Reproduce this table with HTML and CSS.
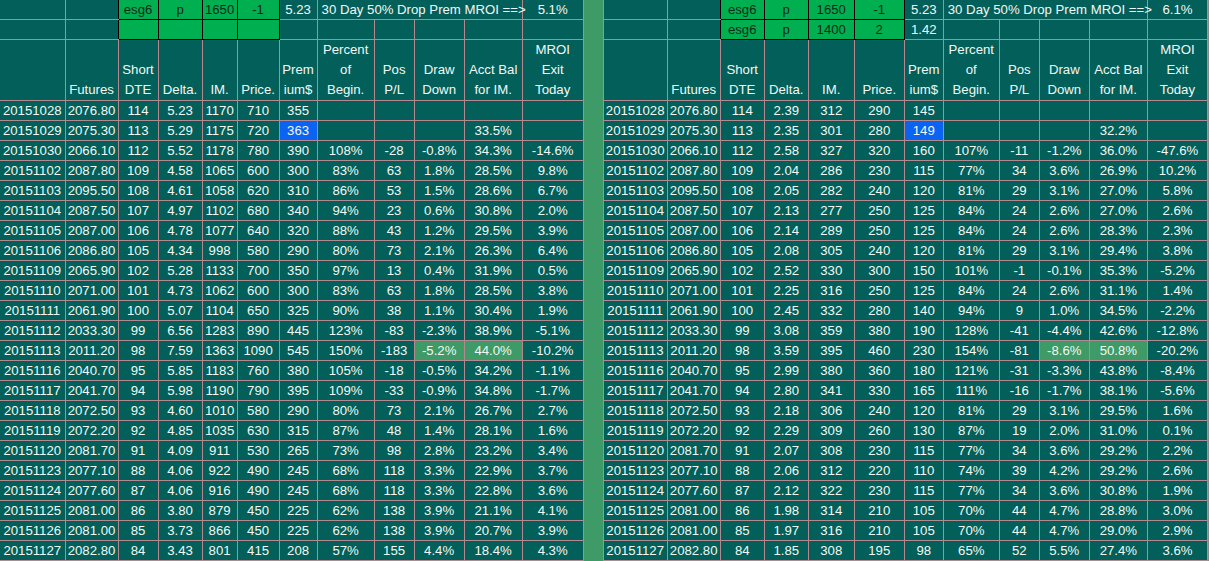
FILE: index.html
```html
<!DOCTYPE html>
<html>
<head>
<meta charset="utf-8">
<link rel="stylesheet" href="styles.css">
</head>
<body>
<table class="sheet">
<colgroup>
<col style="width:65px"><col style="width:53px"><col style="width:40px"><col style="width:44px"><col style="width:35px"><col style="width:42px"><col style="width:38px"><col style="width:57px"><col style="width:40px"><col style="width:50px"><col style="width:58px"><col style="width:61px">
<col style="width:20px">
<col style="width:64px"><col style="width:53px"><col style="width:44px"><col style="width:44px"><col style="width:46px"><col style="width:50px"><col style="width:39px"><col style="width:56px"><col style="width:40px"><col style="width:50px"><col style="width:58px"><col style="width:60px">
</colgroup>
<tbody>
<tr>
<td></td><td class="gl"></td><td class="gc">esg6</td><td class="gc">p</td><td class="gc">1650</td><td class="gc">-1</td><td>5.23</td><td colspan="4" class="lt">30 Day 50% Drop Prem MROI ==&gt;</td><td>5.1%</td>
<td rowspan="26" class="sep"></td>
<td></td><td class="gl"></td><td class="gc">esg6</td><td class="gc">p</td><td class="gc">1650</td><td class="gc">-1</td><td>5.23</td><td colspan="4" class="lt">30 Day 50% Drop Prem MROI ==&gt;</td><td>6.1%</td>
</tr>
<tr>
<td></td><td class="gl"></td><td class="gc"></td><td class="gc"></td><td class="gc"></td><td class="gc"></td><td></td><td></td><td></td><td></td><td></td><td></td>
<td></td><td class="gl"></td><td class="gc">esg6</td><td class="gc">p</td><td class="gc">1400</td><td class="gc">2</td><td>1.42</td><td></td><td></td><td></td><td></td><td></td>
</tr>
<tr class="hd">
<td></td><td>Futures</td><td>Short<br>DTE</td><td>Delta.</td><td>IM.</td><td>Price.</td><td>Prem<br>ium$</td><td>Percent<br>of<br>Begin.</td><td>Pos<br>P/L</td><td>Draw<br>Down</td><td>Acct Bal<br>for IM.</td><td>MROI<br>Exit<br>Today</td>
<td></td><td>Futures</td><td>Short<br>DTE</td><td>Delta.</td><td>IM.</td><td>Price.</td><td>Prem<br>ium$</td><td>Percent<br>of<br>Begin.</td><td>Pos<br>P/L</td><td>Draw<br>Down</td><td>Acct Bal<br>for IM.</td><td>MROI<br>Exit<br>Today</td>
</tr>
<tr><td>20151028</td><td>2076.80</td><td>114</td><td>5.23</td><td>1170</td><td>710</td><td>355</td><td></td><td></td><td></td><td></td><td></td>
<td>20151028</td><td>2076.80</td><td>114</td><td>2.39</td><td>312</td><td>290</td><td>145</td><td></td><td></td><td></td><td></td><td></td></tr>
<tr><td>20151029</td><td>2075.30</td><td>113</td><td>5.29</td><td>1175</td><td>720</td><td class="bl">363</td><td></td><td></td><td></td><td>33.5%</td><td></td>
<td>20151029</td><td>2075.30</td><td>113</td><td>2.35</td><td>301</td><td>280</td><td class="bl">149</td><td></td><td></td><td></td><td>32.2%</td><td></td></tr>
<tr><td>20151030</td><td>2066.10</td><td>112</td><td>5.52</td><td>1178</td><td>780</td><td>390</td><td>108%</td><td>-28</td><td>-0.8%</td><td>34.3%</td><td>-14.6%</td>
<td>20151030</td><td>2066.10</td><td>112</td><td>2.58</td><td>327</td><td>320</td><td>160</td><td>107%</td><td>-11</td><td>-1.2%</td><td>36.0%</td><td>-47.6%</td></tr>
<tr><td>20151102</td><td>2087.80</td><td>109</td><td>4.58</td><td>1065</td><td>600</td><td>300</td><td>83%</td><td>63</td><td>1.8%</td><td>28.5%</td><td>9.8%</td>
<td>20151102</td><td>2087.80</td><td>109</td><td>2.04</td><td>286</td><td>230</td><td>115</td><td>77%</td><td>34</td><td>3.6%</td><td>26.9%</td><td>10.2%</td></tr>
<tr><td>20151103</td><td>2095.50</td><td>108</td><td>4.61</td><td>1058</td><td>620</td><td>310</td><td>86%</td><td>53</td><td>1.5%</td><td>28.6%</td><td>6.7%</td>
<td>20151103</td><td>2095.50</td><td>108</td><td>2.05</td><td>282</td><td>240</td><td>120</td><td>81%</td><td>29</td><td>3.1%</td><td>27.0%</td><td>5.8%</td></tr>
<tr><td>20151104</td><td>2087.50</td><td>107</td><td>4.97</td><td>1102</td><td>680</td><td>340</td><td>94%</td><td>23</td><td>0.6%</td><td>30.8%</td><td>2.0%</td>
<td>20151104</td><td>2087.50</td><td>107</td><td>2.13</td><td>277</td><td>250</td><td>125</td><td>84%</td><td>24</td><td>2.6%</td><td>27.0%</td><td>2.6%</td></tr>
<tr><td>20151105</td><td>2087.00</td><td>106</td><td>4.78</td><td>1077</td><td>640</td><td>320</td><td>88%</td><td>43</td><td>1.2%</td><td>29.5%</td><td>3.9%</td>
<td>20151105</td><td>2087.00</td><td>106</td><td>2.14</td><td>289</td><td>250</td><td>125</td><td>84%</td><td>24</td><td>2.6%</td><td>28.3%</td><td>2.3%</td></tr>
<tr><td>20151106</td><td>2086.80</td><td>105</td><td>4.34</td><td>998</td><td>580</td><td>290</td><td>80%</td><td>73</td><td>2.1%</td><td>26.3%</td><td>6.4%</td>
<td>20151106</td><td>2086.80</td><td>105</td><td>2.08</td><td>305</td><td>240</td><td>120</td><td>81%</td><td>29</td><td>3.1%</td><td>29.4%</td><td>3.8%</td></tr>
<tr><td>20151109</td><td>2065.90</td><td>102</td><td>5.28</td><td>1133</td><td>700</td><td>350</td><td>97%</td><td>13</td><td>0.4%</td><td>31.9%</td><td>0.5%</td>
<td>20151109</td><td>2065.90</td><td>102</td><td>2.52</td><td>330</td><td>300</td><td>150</td><td>101%</td><td>-1</td><td>-0.1%</td><td>35.3%</td><td>-5.2%</td></tr>
<tr><td>20151110</td><td>2071.00</td><td>101</td><td>4.73</td><td>1062</td><td>600</td><td>300</td><td>83%</td><td>63</td><td>1.8%</td><td>28.5%</td><td>3.8%</td>
<td>20151110</td><td>2071.00</td><td>101</td><td>2.25</td><td>316</td><td>250</td><td>125</td><td>84%</td><td>24</td><td>2.6%</td><td>31.1%</td><td>1.4%</td></tr>
<tr><td>20151111</td><td>2061.90</td><td>100</td><td>5.07</td><td>1104</td><td>650</td><td>325</td><td>90%</td><td>38</td><td>1.1%</td><td>30.4%</td><td>1.9%</td>
<td>20151111</td><td>2061.90</td><td>100</td><td>2.45</td><td>332</td><td>280</td><td>140</td><td>94%</td><td>9</td><td>1.0%</td><td>34.5%</td><td>-2.2%</td></tr>
<tr><td>20151112</td><td>2033.30</td><td>99</td><td>6.56</td><td>1283</td><td>890</td><td>445</td><td>123%</td><td>-83</td><td>-2.3%</td><td>38.9%</td><td>-5.1%</td>
<td>20151112</td><td>2033.30</td><td>99</td><td>3.08</td><td>359</td><td>380</td><td>190</td><td>128%</td><td>-41</td><td>-4.4%</td><td>42.6%</td><td>-12.8%</td></tr>
<tr><td>20151113</td><td>2011.20</td><td>98</td><td>7.59</td><td>1363</td><td>1090</td><td>545</td><td>150%</td><td>-183</td><td class="hl">-5.2%</td><td class="hl">44.0%</td><td>-10.2%</td>
<td>20151113</td><td>2011.20</td><td>98</td><td>3.59</td><td>395</td><td>460</td><td>230</td><td>154%</td><td>-81</td><td class="hl">-8.6%</td><td class="hl">50.8%</td><td>-20.2%</td></tr>
<tr><td>20151116</td><td>2040.70</td><td>95</td><td>5.85</td><td>1183</td><td>760</td><td>380</td><td>105%</td><td>-18</td><td>-0.5%</td><td>34.2%</td><td>-1.1%</td>
<td>20151116</td><td>2040.70</td><td>95</td><td>2.99</td><td>380</td><td>360</td><td>180</td><td>121%</td><td>-31</td><td>-3.3%</td><td>43.8%</td><td>-8.4%</td></tr>
<tr><td>20151117</td><td>2041.70</td><td>94</td><td>5.98</td><td>1190</td><td>790</td><td>395</td><td>109%</td><td>-33</td><td>-0.9%</td><td>34.8%</td><td>-1.7%</td>
<td>20151117</td><td>2041.70</td><td>94</td><td>2.80</td><td>341</td><td>330</td><td>165</td><td>111%</td><td>-16</td><td>-1.7%</td><td>38.1%</td><td>-5.6%</td></tr>
<tr><td>20151118</td><td>2072.50</td><td>93</td><td>4.60</td><td>1010</td><td>580</td><td>290</td><td>80%</td><td>73</td><td>2.1%</td><td>26.7%</td><td>2.7%</td>
<td>20151118</td><td>2072.50</td><td>93</td><td>2.18</td><td>306</td><td>240</td><td>120</td><td>81%</td><td>29</td><td>3.1%</td><td>29.5%</td><td>1.6%</td></tr>
<tr><td>20151119</td><td>2072.20</td><td>92</td><td>4.85</td><td>1035</td><td>630</td><td>315</td><td>87%</td><td>48</td><td>1.4%</td><td>28.1%</td><td>1.6%</td>
<td>20151119</td><td>2072.20</td><td>92</td><td>2.29</td><td>309</td><td>260</td><td>130</td><td>87%</td><td>19</td><td>2.0%</td><td>31.0%</td><td>0.1%</td></tr>
<tr><td>20151120</td><td>2081.70</td><td>91</td><td>4.09</td><td>911</td><td>530</td><td>265</td><td>73%</td><td>98</td><td>2.8%</td><td>23.2%</td><td>3.4%</td>
<td>20151120</td><td>2081.70</td><td>91</td><td>2.07</td><td>308</td><td>230</td><td>115</td><td>77%</td><td>34</td><td>3.6%</td><td>29.2%</td><td>2.2%</td></tr>
<tr><td>20151123</td><td>2077.10</td><td>88</td><td>4.06</td><td>922</td><td>490</td><td>245</td><td>68%</td><td>118</td><td>3.3%</td><td>22.9%</td><td>3.7%</td>
<td>20151123</td><td>2077.10</td><td>88</td><td>2.06</td><td>312</td><td>220</td><td>110</td><td>74%</td><td>39</td><td>4.2%</td><td>29.2%</td><td>2.6%</td></tr>
<tr><td>20151124</td><td>2077.60</td><td>87</td><td>4.06</td><td>916</td><td>490</td><td>245</td><td>68%</td><td>118</td><td>3.3%</td><td>22.8%</td><td>3.6%</td>
<td>20151124</td><td>2077.60</td><td>87</td><td>2.12</td><td>322</td><td>230</td><td>115</td><td>77%</td><td>34</td><td>3.6%</td><td>30.8%</td><td>1.9%</td></tr>
<tr><td>20151125</td><td>2081.00</td><td>86</td><td>3.80</td><td>879</td><td>450</td><td>225</td><td>62%</td><td>138</td><td>3.9%</td><td>21.1%</td><td>4.1%</td>
<td>20151125</td><td>2081.00</td><td>86</td><td>1.98</td><td>314</td><td>210</td><td>105</td><td>70%</td><td>44</td><td>4.7%</td><td>28.8%</td><td>3.0%</td></tr>
<tr><td>20151126</td><td>2081.00</td><td>85</td><td>3.73</td><td>866</td><td>450</td><td>225</td><td>62%</td><td>138</td><td>3.9%</td><td>20.7%</td><td>3.9%</td>
<td>20151126</td><td>2081.00</td><td>85</td><td>1.97</td><td>316</td><td>210</td><td>105</td><td>70%</td><td>44</td><td>4.7%</td><td>29.0%</td><td>2.9%</td></tr>
<tr><td>20151127</td><td>2082.80</td><td>84</td><td>3.43</td><td>801</td><td>415</td><td>208</td><td>57%</td><td>155</td><td>4.4%</td><td>18.4%</td><td>4.3%</td>
<td>20151127</td><td>2082.80</td><td>84</td><td>1.85</td><td>308</td><td>195</td><td>98</td><td>65%</td><td>52</td><td>5.5%</td><td>27.4%</td><td>3.6%</td></tr>
</tbody>
</table>
</body>
</html>
```
FILE: styles.css
```css
html, body {
  margin: 0;
  padding: 0;
  background: #8a8a8a;
}
body {
  width: 1209px;
  height: 561px;
  overflow: hidden;
}
.sheet {
  table-layout: fixed;
  border-collapse: collapse;
  width: 1208px;
  background: #035f59;
  color: #f2f8f4;
  font-family: "Liberation Sans", Arial, sans-serif;
  font-size: 13.2px;
}
.sheet td {
  height: 19px;
  padding: 0;
  line-height: 19px;
  text-align: center;
  white-space: nowrap;
  overflow: hidden;
  border: 1px solid #b3888f;
}
.sheet tr:first-child td {
  border-top: none;
}
.sheet td:first-child {
  border-left: none;
}
.sheet .hd td {
  height: 59px;
  line-height: 20px;
  vertical-align: bottom;
}
.sheet td.lt {
  text-align: left;
  padding-left: 4px;
  overflow: visible;
}
.sheet td.gc {
  background: #00b050;
  color: #112a18;
  border: 1px solid #000;
}
.sheet td.gl {
  border-right: 1px solid #000;
}
.sheet td.sep {
  background: #3e9a66;
  border-top: none;
  border-bottom: none;
}
.sheet td.bl {
  background: #0b63f2;
}
.sheet td.hl {
  background: #3e9a66;
}
```
